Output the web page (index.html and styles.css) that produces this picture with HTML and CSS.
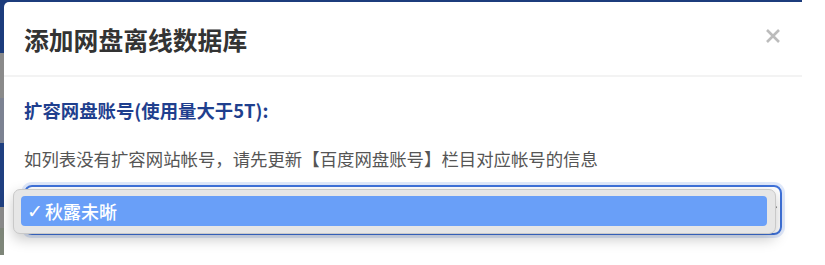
FILE: index.html
```html
<!DOCTYPE html>
<html lang="zh-CN">
<head>
<meta charset="utf-8">
<link rel="stylesheet" href="styles.css">
</head>
<body>
<div class="stage">
  <div class="topbar"></div>
  <div class="strip">
    <div class="seg s1"></div>
    <div class="seg s2"></div>
    <div class="seg s3"></div>
    <div class="seg s4"></div>
    <div class="seg s5"></div>
    <div class="seg s6"></div>
  </div>
  <div class="modal">
    <div class="header">
      <h1 class="title">添加网盘离线数据库</h1>
      <svg class="close" width="16" height="16" viewBox="0 0 16 16"><path d="M2 2 L14 14 M14 2 L2 14" stroke="#bcbcbc" stroke-width="2.6" stroke-linecap="butt"/></svg>
    </div>
    <div class="body">
      <div class="label">扩容网盘账号(使用量大于5T):</div>
      <div class="hint">如列表没有扩容网站帐号，请先更新【百度网盘账号】栏目对应帐号的信息</div>
      <div class="select-wrap">
        <div class="select"></div>
        <svg class="arrow" width="6" height="8" viewBox="0 0 6 8"><path d="M1 7 L5 1" stroke="#333" stroke-width="1.4" stroke-linecap="round"/></svg>
        <div class="popup">
          <div class="option"><span class="check">✓</span><span>秋露未晰</span></div>
        </div>
      </div>
    </div>
  </div>
</div>
</body>
</html>
```
FILE: styles.css
```css
html, body {
  margin: 0;
  padding: 0;
  background: #fff;
  font-family: "Noto Sans CJK SC", "Noto Sans", sans-serif;
}
.stage {
  width: 802px;
  height: 265px;
  display: grid;
  grid-template-columns: 4px 1fr;
  grid-template-rows: 2px 1fr;
  background: #1c3c7c;
  overflow: hidden;
}
.topbar {
  grid-column: 1 / 3;
  background: #1c3c7c;
}
.strip {
  display: flex;
  flex-direction: column;
  background: #fff;
}
.seg { flex: none; }
.s1 { height: 51px; background: #1c3c7c; }
.s2 { height: 45px; background: #8a8a8a; }
.s3 { height: 45px; background: #7c8292; }
.s4 { height: 64px; background: #1f3f80; }
.s5 { height: 21px; background: #8a8a8a; }
.s6 { height: 27px; background: #7e8679; }
.modal {
  background: #fff;
  border-top-left-radius: 5px;
  display: flex;
  flex-direction: column;
}
.header {
  height: 73px;
  display: flex;
  align-items: center;
  justify-content: space-between;
  padding: 0 20px;
  border-bottom: 2px solid #f3f3f3;
}
.title {
  margin: 0;
  font-size: 24.8px;
  font-weight: 700;
  color: #333;
  line-height: 32px;
}
.close {
  margin-right: 1px;
  margin-top: -6px;
}
.body {
  padding: 0 20px;
  display: flex;
  flex-direction: column;
}
.label {
  margin-top: 21px;
  font-size: 18.4px;
  line-height: 24px;
  font-weight: 700;
  color: #1f3f8e;
}
.hint {
  margin-top: 25px;
  font-size: 17.4px;
  line-height: 24px;
  color: #555;
}
.select-wrap {
  margin-top: 14px;
  position: relative;
}
.select {
  height: 46px;
  border: 2px solid #3f72da;
  border-radius: 8px;
  box-shadow: 0 0 0 3px rgba(80, 130, 230, 0.18);
}
.arrow {
  position: absolute;
  right: 5px;
  top: 21px;
}
.popup {
  position: absolute;
  left: -11px;
  top: 4px;
  width: 746px;
  height: 30px;
  padding: 6px 8px 7px 7px;
  background: #e6e6e6;
  border: 1px solid #c9c9c9;
  border-radius: 7px;
  box-shadow: 0 5px 14px rgba(0, 0, 0, 0.22);
}
.option {
  height: 30px;
  background: #699ff8;
  border-radius: 4px;
  color: #fff;
  font-size: 18px;
  font-weight: 500;
  line-height: 30px;
  display: flex;
  align-items: center;
  padding-left: 6px;
}
.check {
  width: 18px;
  font-family: "DejaVu Sans", sans-serif;
  font-size: 19px;
  font-weight: 700;
}
```
